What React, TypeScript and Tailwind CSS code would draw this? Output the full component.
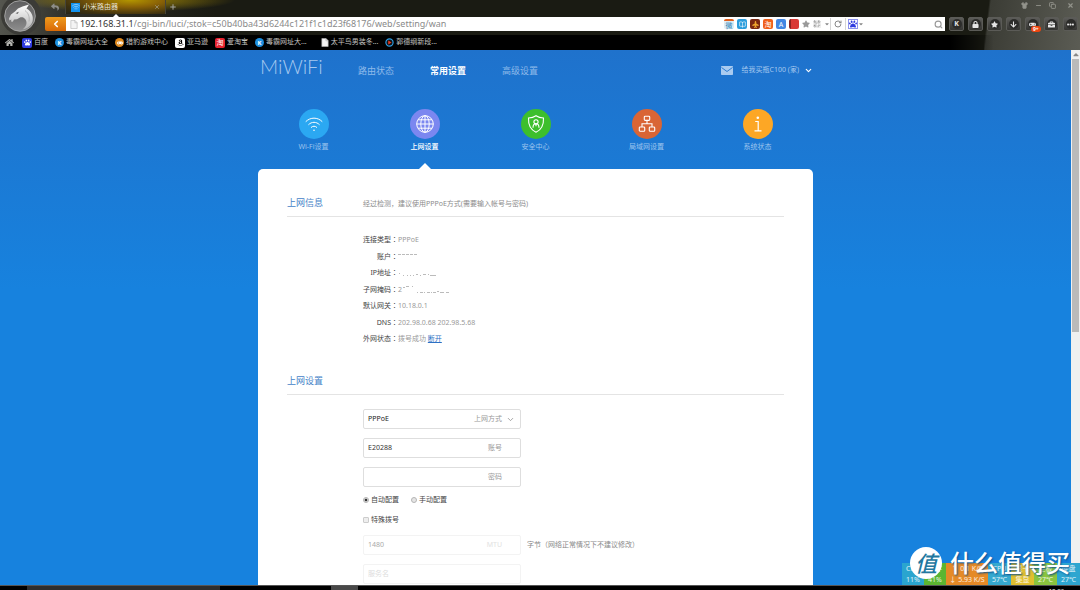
import React, { useState } from "react";
import {
    BookOpen,
    ChevronDown,
    ChevronLeft,
    Copy,
    Minus,
    Plus,
    QrCode,
    RotateCw,
    Search,
    Shirt,
    X,
} from "lucide-react";
import {
    FaAmazon,
    FaArrowDown,
    FaBriefcase,
    FaCaretDown,
    FaCaretUp,
    FaEllipsisH,
    FaGamepad,
    FaHome,
    FaLock,
    FaPaw,
    FaPlane,
    FaReply,
    FaStar,
} from "react-icons/fa";

const tile = "flex h-[10px] w-[10px] shrink-0 items-center justify-center rounded-[2px] text-[7px] leading-none text-white";
const disc = "flex h-[9px] w-[9px] shrink-0 items-center justify-center rounded-full text-[6px] font-bold leading-none text-white";

function PageIcon() {
    return (
        <svg viewBox="0 0 8 10" className="h-[9px] w-[8px] shrink-0">
            <path d="M.5.5h4.6l2.4 2.4v6.6h-7z" fill="#f4f4f4" stroke="#b5b5b5" strokeWidth=".7" />
            <path d="M5 .5v2.6h2.5" fill="none" stroke="#b5b5b5" strokeWidth=".7" />
        </svg>
    );
}

function WifiGlyph({ className }: { className: string }) {
    return (
        <svg viewBox="0 0 18 18" className={className} fill="none" stroke="currentColor" strokeWidth="1" strokeLinecap="round">
            <path d="M1 6.4C5.4 2 12.6 2 17 6.4" />
            <path d="M3.7 9.5c3-3 7.6-3 10.6 0" />
            <path d="M6.3 12.3c1.6-1.5 3.8-1.5 5.4 0" />
            <circle cx="9" cy="15.2" r=".8" fill="currentColor" stroke="none" />
        </svg>
    );
}

function DragonLogo() {
    return (
        <svg viewBox="0 0 42 38" className="absolute left-0 top-0 h-[38px] w-[42px]">
            <defs>
                <linearGradient id="ring" x1="0" y1="0" x2="0" y2="1">
                    <stop offset="0" stopColor="#5f5f60" />
                    <stop offset=".6" stopColor="#757576" />
                    <stop offset="1" stopColor="#8f8f8f" />
                </linearGradient>
                <linearGradient id="head" x1="0" y1="0" x2="0" y2="1">
                    <stop offset="0" stopColor="#ffffff" />
                    <stop offset="1" stopColor="#b4b4b4" />
                </linearGradient>
            </defs>
            <circle cx="21" cy="15" r="20" fill="#3b3b37" />
            <circle cx="20" cy="16" r="15.3" fill="url(#ring)" stroke="#b3b3b3" strokeWidth=".8" />
            <path
                d="M29 4.500L26.500 8.500C31 11 34 16 32.500 21.500 31 26 27.500 28.500 22.500 29.500 26.500 26.500 27.500 22.500 25.500 19.500 24 17.300 21.800 17 20 17.500L17 19.300 14 19.600 12.800 21.800 11 21.600 11.400 19.600 9.400 20.600 9 18.500 11 14.500 15 11.500 18 8.500 22.500 6.500z"
                fill="url(#head)"
            />
            <path d="M15.500 13.300l3.200-1.500-.8 1.900z" fill="#555" />
            <path d="M25 10.500c3.300 2.500 4.800 6 4 11" fill="none" stroke="#a5a5a5" strokeWidth=".7" />
        </svg>
    );
}

const bookmarks = [
    { name: "百度", icon: <span className={`${tile} bg-[#2f3be0]`}><FaPaw /></span> },
    { name: "毒霸网址大全", icon: <span className={`${disc} bg-[#1c8fe0]`}>K</span> },
    { name: "猎豹游戏中心", icon: <span className={`${disc} bg-[#e08a1e]`}><FaGamepad /></span> },
    { name: "亚马逊", icon: <span className={`${tile} bg-white !text-black`}><FaAmazon /></span> },
    { name: "爱淘宝", icon: <span className={`${tile} bg-[#e8232f]`}>淘</span> },
    { name: "毒霸网址大...", icon: <span className={`${disc} bg-[#1c8fe0]`}>K</span> },
    { name: "太平鸟男装冬...", icon: <PageIcon />, wide: true },
    {
        name: "郭德纲新段...",
        icon: (
            <svg viewBox="0 0 10 10" className="h-[9px] w-[9px] shrink-0">
                <circle cx="5" cy="5" r="4" fill="#111" stroke="#2fa0e6" strokeWidth="1.3" />
                <path d="M3.6 2.8l3.6 2.2-3.6 2.2z" fill="#f03a20" />
            </svg>
        ),
    },
];

const toolButtons = [
    { label: "金山", icon: <b>K</b> },
    { label: "锁定", icon: <FaLock /> },
    { label: "收藏", icon: <FaStar /> },
    { label: "下载", icon: <FaArrowDown /> },
    { label: "游戏", icon: <FaGamepad />, badge: "9+" },
    { label: "工具", icon: <FaBriefcase /> },
    { label: "更多", icon: <FaEllipsisH /> },
];

function BrowserChrome() {
    const [path, setPath] = useState("/cgi-bin/luci/;stok=c50b40ba43d6244c121f1c1d23f68176/web/setting/wan");

    return (
        <header className="relative shrink-0 bg-[#1a1b13] bg-[radial-gradient(110px_12px_at_125px_0px,#a88c00_0%,transparent_100%),linear-gradient(96deg,#55564f_0%,#2c2c25_7%,transparent_20%)]">
            <div className="absolute inset-y-0 right-0 w-[96px] bg-[linear-gradient(97deg,transparent_5%,#3b3c35_7%,#5b5c54_100%)]" />

            <div className="relative flex h-[17px] items-start pl-[45px]">
                <button aria-label="撤销" className="flex h-[14px] w-5 items-center justify-center text-[8px] text-[#8d8d88]">
                    <FaReply />
                </button>
                <div className="relative flex h-[14px] w-[101px] items-center border-x border-[#45443a] bg-[radial-gradient(ellipse_at_65%_0%,#b39600_0%,#8a6206_35%,#3d3110_75%,#25241a_100%)] px-[5px] text-[7px] text-[#e8e4d4]">
                    <span className="flex h-[9px] w-[9px] items-center justify-center bg-[#1393ef] text-white">
                        <WifiGlyph className="h-2 w-2" />
                    </span>
                    <span className="ml-[3px] flex-1">小米路由器</span>
                    <button aria-label="关闭标签页" className="text-[#a29c85]"><X size={6} strokeWidth={3} /></button>
                    <svg viewBox="0 0 8 4" className="absolute left-[46px] top-[14px] h-1 w-2"><path d="M0 4l4-4 4 4z" fill="#fff" /></svg>
                </div>
                <button aria-label="新建标签页" className="flex h-[14px] w-[14px] items-center justify-center text-[#a5a5a0]">
                    <Plus size={8} strokeWidth={3} />
                </button>
                <div className="ml-auto flex h-[11px] items-center gap-[7px] pr-[6px] text-[#92938b]">
                    <button aria-label="皮肤"><Shirt size={7} fill="currentColor" /></button>
                    <button aria-label="最小化"><Minus size={7} strokeWidth={3} /></button>
                    <button aria-label="还原"><Copy size={7} strokeWidth={3} /></button>
                    <button aria-label="关闭" className="ml-1"><X size={7} strokeWidth={4} /></button>
                </div>
            </div>

            <div className="relative flex h-[14px] items-center pl-[45px] pr-[2px]">
                <button aria-label="后退" className="flex h-[14px] w-[21px] items-center justify-center rounded-l-[2px] bg-gradient-to-b from-[#ee9a1c] to-[#d96a06] text-white">
                    <ChevronLeft size={10} strokeWidth={4} />
                </button>
                <div className="flex h-[14px] min-w-0 flex-1 items-center bg-white pl-1 text-[9px] leading-[14px]">
                    <PageIcon />
                    <label htmlFor="url" className="ml-[2px] text-[#333]">192.168.31.1</label>
                    <input
                        id="url"
                        value={path}
                        onChange={(e) => setPath(e.target.value)}
                        className="h-[14px] min-w-0 flex-1 text-[#8a8a8a] outline-none"
                    />
                    <div className="flex items-center gap-[3px]">
                        <span className={`${tile} border-t-2 border-[#e2601c] bg-[#dcecf4] !text-[#2a7fb4]`}>微</span>
                        <span className={`${tile} bg-[#2b9ddc]`}><BookOpen size={7} /></span>
                        <span className={`${tile} bg-[#7a2811] !text-[#eda52d]`}><FaPlane className="-rotate-90" /></span>
                        <span className={`${tile} bg-[#f0601a]`}>淘</span>
                        <span className={`${tile} bg-[#4287e2]`}>A</span>
                        <span className={`${tile} border-l-2 border-[#8a2522] bg-[#d93a36]`} />
                        <span className="text-[8px] text-[#999]"><FaStar /></span>
                        <QrCode size={8} className="text-[#888]" />
                        <FaCaretDown className="text-[6px] text-[#888]" />
                    </div>
                    <button aria-label="刷新" className="flex h-[12px] w-[16px] items-center justify-center border-x border-[#d5d5d5] text-[#888]">
                        <RotateCw size={8} strokeWidth={3} />
                    </button>
                    <span className="ml-[2px] flex h-[10px] w-[10px] items-center justify-center border border-[#8d93ee] text-[8px] text-[#2f3be0]"><FaPaw /></span>
                    <FaCaretDown className="text-[6px] text-[#888]" />
                    <input aria-label="搜索" className="h-3 w-[70px] outline-none" />
                    <Search size={9} strokeWidth={3} className="mr-[2px] text-[#999]" />
                </div>
                <div className="ml-1 flex gap-1">
                    {toolButtons.map((b) => (
                        <button
                            key={b.label}
                            aria-label={b.label}
                            className="relative flex h-[14px] w-[15px] items-center justify-center rounded-[2px] border border-[#5b5b57] bg-gradient-to-b from-[#5c5c59] to-[#353532] text-[7px] text-[#e6e6e6]"
                        >
                            <span className="flex h-[10px] w-[10px] items-center justify-center rounded-full bg-[#2c2c2a]">{b.icon}</span>
                            {b.badge && (
                                <span className="absolute -bottom-[2px] left-[5px] rounded-full bg-[#ee4510] px-[2px] text-[5px] font-bold leading-[6px] text-white">
                                    {b.badge}
                                </span>
                            )}
                        </button>
                    ))}
                </div>
            </div>

            <nav className="relative mt-1 flex h-[15px] items-center bg-[linear-gradient(90deg,#000_88%,transparent_92%)] pl-[5px] text-[7px] text-[#c4c4c0]">
                <a href="#home" aria-label="主页" className="mr-2 text-[9px] text-[#b5b5b0]"><FaHome /></a>
                {bookmarks.map((b) => (
                    <a key={b.name} href="#bookmark" className={`mr-[7px] flex items-center gap-[2px] ${b.wide ? "ml-[7px]" : ""}`}>
                        {b.icon}
                        {b.name}
                    </a>
                ))}
            </nav>
            <DragonLogo />
        </header>
    );
}

const shortcuts = [
    { name: "Wi-Fi设置", color: "bg-[#2ba8f2]", icon: <WifiGlyph className="h-[18px] w-[18px]" /> },
    {
        name: "上网设置",
        color: "bg-[#7b87f0]",
        active: true,
        icon: (
            <svg viewBox="0 0 18 18" className="h-[18px] w-[18px]" fill="none" stroke="currentColor" strokeWidth="1">
                <circle cx="9" cy="9" r="8.3" />
                <ellipse cx="9" cy="9" rx="4.2" ry="8.3" />
                <path d="M9 .7v16.6M.7 9h16.6M2 4.8h14M2 13.2h14" />
            </svg>
        ),
    },
    {
        name: "安全中心",
        color: "bg-[#3dbf2c]",
        icon: (
            <svg viewBox="0 0 18 18" className="h-[18px] w-[18px]" fill="none" stroke="currentColor" strokeWidth="1.1">
                <path d="M9 .8c2.2 1.6 4.8 2.2 7.5 2.2.3 6.6-1.7 11.6-7.5 14.2C3.2 14.6 1.2 9.6 1.5 3 4.2 3 6.8 2.4 9 .8z" />
                <circle cx="9" cy="6.8" r="2.1" />
                <path d="M6 12.7c0-2.3.8-3.9 3-3.9s3 1.6 3 3.9M9 9v2.2" />
            </svg>
        ),
    },
    {
        name: "局域网设置",
        color: "bg-[#d96535]",
        icon: (
            <svg viewBox="0 0 18 18" className="h-[18px] w-[18px]" fill="none" stroke="currentColor" strokeWidth="1.1">
                <rect x="6.3" y="1.2" width="5.4" height="4.2" rx=".8" />
                <rect x="1.3" y="12" width="5.4" height="4.2" rx=".8" />
                <rect x="11.3" y="12" width="5.4" height="4.2" rx=".8" />
                <path d="M9 5.4v3.3M4 12V8.7h10V12" />
            </svg>
        ),
    },
    {
        name: "系统状态",
        color: "bg-[#fda725]",
        icon: (
            <svg viewBox="0 0 18 18" className="h-[18px] w-[18px]" fill="none" stroke="currentColor" strokeWidth="1.2">
                <circle cx="8.8" cy="2.8" r="1.3" fill="currentColor" stroke="none" />
                <path d="M6.2 6.5h3v9.3M5.5 15.8h7" />
            </svg>
        ),
    },
];

function Smudge({ d, width }: { d: string; width: number }) {
    return (
        <svg width={width} height="10" viewBox={`0 0 ${width} 10`} fill="none" stroke="#bbb" strokeWidth="1" className="inline-block align-top">
            <path d={d} />
        </svg>
    );
}

const info: { label: string; value: React.ReactNode }[] = [
    { label: "连接类型", value: "PPPoE" },
    { label: "账户", value: <Smudge width={20} d="M0 2.5h3m1 0h3m1 0h3m1 0h3m1 0h3" /> },
    { label: "IP地址", value: <Smudge width={38} d="M1 5.5h1m3 2h1m3 0h1m2 0h1m2 0h1m2-1h2m2 1h1m2-1h3m2 0h1m1 1h6" /> },
    { label: "子网掩码", value: <>2<Smudge width={48} d="M1 2.5h2m1-1h3m3 0h1m4 6h1m2 0h3m1 0h1m2 0h3m1 0h1m1 0h3m1-1h2m1 1h4m2 0h3" /></> },
    { label: "默认网关", value: "10.18.0.1" },
    { label: "DNS", value: "202.98.0.68 202.98.5.68" },
    {
        label: "外网状态",
        value: <>拨号成功 <a href="#disconnect" className="text-[#2c70c4] underline">断开</a></>,
    },
];

function SectionTitle({ title, note }: { title: string; note?: string }) {
    return (
        <div className="flex h-6 border-b border-[#e4e4e4] leading-5">
            <h2 className="w-[76px] shrink-0 text-[9px] text-[#4583c8]">{title}</h2>
            {note && <p className="pt-px text-[7px] text-[#8c8c8c]">{note}</p>}
        </div>
    );
}

interface FieldProps {
    id: string;
    label?: string;
    value: string;
    type?: string;
    placeholder?: string;
    disabled?: boolean;
    onChange?: (value: string) => void;
}

function Field({ id, label, value, type = "text", placeholder, disabled, onChange }: FieldProps) {
    return (
        <div className={`flex h-5 w-[158px] items-center rounded-[2px] border pl-1 pr-[18px] ${disabled ? "border-[#f3f3f3] text-[#aaa]" : "border-[#dedede] text-[#333]"}`}>
            <input
                id={id}
                type={type}
                value={value}
                disabled={disabled}
                placeholder={placeholder}
                aria-label={label ? undefined : placeholder}
                onChange={(e) => onChange?.(e.target.value)}
                className="min-w-0 flex-1 outline-none placeholder:text-[#ddd]"
            />
            {label && <label htmlFor={id} className={disabled ? "text-[#e2e2e2]" : "text-[#999]"}>{label}</label>}
        </div>
    );
}

function WanForm() {
    const [account, setAccount] = useState("E20288");
    const [password, setPassword] = useState("");
    const [mode, setMode] = useState("auto");
    const [special, setSpecial] = useState(false);

    const radio = "h-[6px] w-[6px] appearance-none rounded-full border border-[#b5b5b5] bg-[#e6e6e6] checked:bg-[radial-gradient(#333_40%,#e6e6e6_60%)]";

    return (
        <form className="ml-[76px] mt-[14px] text-[7px] leading-[10px] text-[#444]">
            <div className="flex flex-col gap-[9px]">
                <div className="flex h-5 w-[158px] items-center rounded-[2px] border border-[#dedede] pl-1 pr-[5px]">
                    <select id="wan-type" className="min-w-0 flex-1 appearance-none text-[#222] outline-none">
                        <option>PPPoE</option>
                        <option>DHCP</option>
                    </select>
                    <label htmlFor="wan-type" className="mr-1 text-[#999]">上网方式</label>
                    <ChevronDown size={9} className="text-[#888]" />
                </div>
                <Field id="account" label="账号" value={account} onChange={setAccount} />
                <Field id="password" label="密码" type="password" value={password} onChange={setPassword} />
            </div>
            <div className="mt-2 flex h-[10px] items-center gap-3">
                <label className="flex items-center gap-[2px]">
                    <input type="radio" name="dns" className={radio} checked={mode === "auto"} onChange={() => setMode("auto")} />
                    自动配置
                </label>
                <label className="flex items-center gap-[2px]">
                    <input type="radio" name="dns" className={radio} checked={mode === "manual"} onChange={() => setMode("manual")} />
                    手动配置
                </label>
            </div>
            <label className="mt-[10px] flex h-[10px] items-center gap-[2px]">
                <input
                    type="checkbox"
                    checked={special}
                    onChange={(e) => setSpecial(e.target.checked)}
                    className="h-[6px] w-[6px] appearance-none rounded-[1px] border border-[#ccc] bg-[#eee] checked:bg-[#444]"
                />
                特殊拨号
            </label>
            <div className="mt-[10px] flex flex-col gap-[9px]">
                <div className="flex items-center gap-[6px] text-[#888]">
                    <Field id="mtu" label="MTU" value="1480" disabled />
                    字节（网络正常情况下不建议修改）
                </div>
                <Field id="service" placeholder="服务名" value="" disabled />
            </div>
        </form>
    );
}

function RouterPage() {
    return (
        <main className="min-w-0 flex-1 overflow-hidden bg-[#1782de] bg-[linear-gradient(#1f72cc_0px,#1782de_240px)]">
            <div className="mx-auto w-full max-w-[555px]">
                <div className="flex h-[41px] items-center">
                    <a href="#index" className="w-[100px] pb-[9px] pl-[2px] font-['Lato'] text-[20px] font-light leading-none text-[#a5c8ef]">MiWiFi</a>
                    <nav className="flex gap-9 text-[9px] text-[#8fbaea]">
                        <a href="#status">路由状态</a>
                        <a href="#setting" className="font-bold text-white">常用设置</a>
                        <a href="#advanced">高级设置</a>
                    </nav>
                    <button className="ml-auto flex items-center text-[7px] text-[#a5c8ee]">
                        <svg viewBox="0 0 12 9" className="mr-[9px] h-[9px] w-3">
                            <rect width="12" height="9" rx=".8" fill="#a9cbf0" />
                            <path d="M.5 1.5L6 5.5l5.5-4" fill="none" stroke="#1f74ce" strokeWidth=".9" />
                        </svg>
                        给我买瓶C100 (家)
                        <ChevronDown size={9} strokeWidth={3} className="ml-[5px] text-white" />
                    </button>
                </div>

                <nav className="mt-[18px] grid grid-cols-5">
                    {shortcuts.map((s) => (
                        <a key={s.name} href="#shortcut" className="flex flex-col items-center">
                            <span className={`flex h-[30px] w-[30px] items-center justify-center rounded-full text-white ${s.color}`}>{s.icon}</span>
                            <span className={`mt-[3px] text-[7px] leading-[10px] ${s.active ? "font-medium text-white" : "text-[#9dc4ee]"}`}>{s.name}</span>
                            {s.active && (
                                <svg viewBox="0 0 12 6" className="mt-[11px] h-[6px] w-3"><path d="M0 6l6-6 6 6z" fill="#fff" /></svg>
                            )}
                        </a>
                    ))}
                </nav>

                <section className="min-h-screen rounded-[5px] bg-white px-[29px] pt-6">
                    <SectionTitle title="上网信息" note="经过检测，建议使用PPPoE方式(需要输入帐号与密码)" />
                    <dl className="mt-[18px] grid h-[109px] grid-cols-[111px_1fr] content-between text-[7px] leading-[10px]">
                        {info.map((row) => (
                            <React.Fragment key={row.label}>
                                <dt className="flex justify-end text-[#444]">
                                    {row.label}
                                    <span className="font-['Noto_Sans','Noto_Sans_CJK_TC',sans-serif]">：</span>
                                </dt>
                                <dd className="text-[#999]">{row.value}</dd>
                            </React.Fragment>
                        ))}
                    </dl>
                    <div className="mt-[27px]">
                        <SectionTitle title="上网设置" />
                    </div>
                    <WanForm />
                </section>
            </div>
        </main>
    );
}

const meters = [
    { top: "CPU", bottom: "11%", style: "w-[22px] bg-[#2aa5cf]" },
    { top: "内存", bottom: "41%", style: "w-[22px] bg-[#5cb531]" },
    { top: "↑ 0.1 K/S", bottom: "↓ 5.93 K/S", style: "w-[42px] bg-[#e58a27]" },
    { top: "CPU", bottom: "57℃", style: "w-[23px] bg-[#35a9cf]" },
    { top: "显卡", bottom: "集显", style: "w-[23px] bg-[#e0bf30]" },
    { top: "主板", bottom: "27℃", style: "w-[23px] bg-[#8ac43f]" },
    { top: "硬盘", bottom: "27℃", style: "w-[23px] bg-[#2ea6d0]" },
];

function DesktopOverlay() {
    return (
        <>
            <div className="absolute bottom-[5px] right-0 flex text-center text-[7px] leading-[11px] text-white/85">
                {meters.map((m, i) => (
                    <div key={i} className={`whitespace-nowrap ${m.style}`}>
                        <div>{m.top}</div>
                        <div>{m.bottom}</div>
                    </div>
                ))}
            </div>
            <div className="absolute bottom-[11px] right-[10px] flex items-center gap-2">
                <span className="flex h-8 w-8 items-center justify-center rounded-full bg-white text-[22px] font-medium italic leading-none text-[#22789f]">值</span>
                <span className="text-[24px] font-medium leading-8 text-white [text-shadow:1px_1px_2px_#0b4f8a]">什么值得买</span>
            </div>
        </>
    );
}

export default function App() {
    return (
        <div className="relative flex h-screen flex-col overflow-hidden bg-black font-['Noto_Sans','Noto_Sans_CJK_SC',sans-serif]">
            <BrowserChrome />
            <div className="flex min-h-0 flex-1">
                <RouterPage />
                <div className="flex w-[9px] shrink-0 flex-col items-center bg-[#f0f0f0]">
                    <FaCaretUp className="h-[9px] text-[6px] text-[#888]" />
                    <div className="h-[51%] w-[7px] bg-[#bababa]" />
                </div>
            </div>
            <footer className="flex h-[5px] shrink-0 overflow-hidden border-t border-[#555] bg-black pl-[27px] text-[6px] leading-[10px] text-white">
                <div className="w-[193px] bg-[#2e2e2e]" />
                <div className="ml-[111px] w-[27px] bg-[#484848]" />
                <time className="ml-auto pr-4">18:03</time>
            </footer>
            <DesktopOverlay />
        </div>
    );
}
